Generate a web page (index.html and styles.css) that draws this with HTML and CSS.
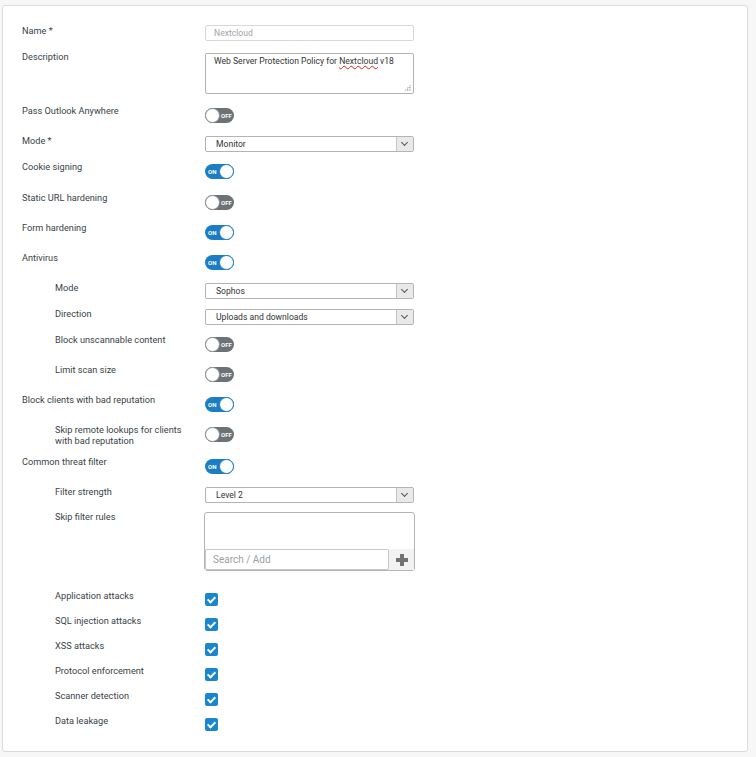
FILE: index.html
```html
<!DOCTYPE html>
<html lang="en">
<head>
    <meta charset="UTF-8">
    <title>Web Server Protection Policy</title>
    <link rel="stylesheet" href="styles.css">
</head>
<body>
    <div class="panel">
        <div class="row r-name">
            <label>Name *</label>
            <div class="input disabled">Nextcloud</div>
        </div>
        <div class="row r-desc">
            <label>Description</label>
            <div class="textarea">Web Server Protection Policy for <span class="typo">Nextcloud</span> v18<span class="grip"></span></div>
        </div>
        <div class="row r-toggle">
            <label>Pass Outlook Anywhere</label>
            <div class="toggle off"><span class="knob"></span><span class="txt">OFF</span></div>
        </div>
        <div class="row r-select">
            <label>Mode *</label>
            <div class="select"><span>Monitor</span><span class="arrow"></span></div>
        </div>
        <div class="row r-toggle r-gap">
            <label>Cookie signing</label>
            <div class="toggle on"><span class="txt">ON</span><span class="knob"></span></div>
        </div>
        <div class="row r-toggle">
            <label>Static URL hardening</label>
            <div class="toggle off"><span class="knob"></span><span class="txt">OFF</span></div>
        </div>
        <div class="row r-toggle">
            <label>Form hardening</label>
            <div class="toggle on"><span class="txt">ON</span><span class="knob"></span></div>
        </div>
        <div class="row r-toggle">
            <label>Antivirus</label>
            <div class="toggle on"><span class="txt">ON</span><span class="knob"></span></div>
        </div>
        <div class="row r-select sub">
            <label>Mode</label>
            <div class="select"><span>Sophos</span><span class="arrow"></span></div>
        </div>
        <div class="row r-select sub">
            <label>Direction</label>
            <div class="select"><span>Uploads and downloads</span><span class="arrow"></span></div>
        </div>
        <div class="row r-toggle sub">
            <label>Block unscannable content</label>
            <div class="toggle off"><span class="knob"></span><span class="txt">OFF</span></div>
        </div>
        <div class="row r-toggle sub">
            <label>Limit scan size</label>
            <div class="toggle off"><span class="knob"></span><span class="txt">OFF</span></div>
        </div>
        <div class="row r-toggle">
            <label>Block clients with bad reputation</label>
            <div class="toggle on"><span class="txt">ON</span><span class="knob"></span></div>
        </div>
        <div class="row r-toggle r-tall sub">
            <label>Skip remote lookups for clients with bad reputation</label>
            <div class="toggle off"><span class="knob"></span><span class="txt">OFF</span></div>
        </div>
        <div class="row r-toggle">
            <label>Common threat filter</label>
            <div class="toggle on"><span class="txt">ON</span><span class="knob"></span></div>
        </div>
        <div class="row r-select r-short sub">
            <label>Filter strength</label>
            <div class="select"><span>Level 2</span><span class="arrow"></span></div>
        </div>
        <div class="row r-rules sub">
            <label>Skip filter rules</label>
            <div class="rules">
                <div class="rules-list"></div>
                <div class="rules-add">
                    <div class="search">Search / Add</div>
                    <span class="plus"></span>
                </div>
            </div>
        </div>
        <div class="row r-check sub">
            <label>Application attacks</label>
            <span class="check"></span>
        </div>
        <div class="row r-check sub">
            <label>SQL injection attacks</label>
            <span class="check"></span>
        </div>
        <div class="row r-check sub">
            <label>XSS attacks</label>
            <span class="check"></span>
        </div>
        <div class="row r-check sub">
            <label>Protocol enforcement</label>
            <span class="check"></span>
        </div>
        <div class="row r-check sub">
            <label>Scanner detection</label>
            <span class="check"></span>
        </div>
        <div class="row r-check sub">
            <label>Data leakage</label>
            <span class="check"></span>
        </div>
    </div>
</body>
</html>
```

FILE: styles.css
```css
* {
    margin: 0;
    padding: 0;
    box-sizing: border-box;
}

body {
    font-family: Roboto, 'Liberation Sans', sans-serif;
    font-size: 9.2px;
    color: #3a3f47;
    background: #f7f7f7;
    padding: 5px 8px 0 2px;
    overflow: hidden;
}

.panel {
    background: white;
    border: 1px solid #dcdcdc;
    border-radius: 3px;
    padding: 18px 0 0 19px;
    height: 747px;
}

.row {
    display: grid;
    grid-template-columns: 183px 209px;
    align-items: start;
}

.row label {
    display: block;
    line-height: 11px;
    padding-top: 1px;
}

.row.sub label {
    padding-left: 33px;
    padding-right: 10px;
}

.r-name { height: 26px; }
.r-desc { height: 54px; }
.r-toggle { height: 30px; }
.r-toggle.r-gap { height: 31px; }
.r-toggle.r-tall { height: 32px; }
.r-select { height: 26px; }
.r-select.r-short { height: 25px; }
.r-rules { height: 79px; }
.r-check { height: 25px; }

/* text fields */
.input {
    height: 16px;
    margin-top: 1px;
    border: 1px solid #d8d8d8;
    border-radius: 2px;
    padding: 0 8px;
    font-size: 8.6px;
    line-height: 14px;
}

.input.disabled {
    color: #a0a4a8;
}

.textarea {
    position: relative;
    height: 41px;
    margin-top: 3px;
    border: 1px solid #b4b4b4;
    border-radius: 2px;
    padding: 2px 8px;
    font-size: 8.6px;
    line-height: 11px;
    color: #333;
}

.typo {
    text-decoration: underline wavy #e02020;
    text-decoration-thickness: 1px;
    text-underline-offset: 1px;
}

.grip {
    position: absolute;
    right: 2px;
    bottom: 2px;
    width: 7px;
    height: 7px;
    background:
        radial-gradient(circle, #999 0.7px, transparent 0.9px) 0 0 / 2.4px 2.4px;
    clip-path: polygon(100% 0, 100% 100%, 0 100%);
}

/* selects */
.select {
    display: flex;
    height: 16px;
    margin-top: 2px;
    border: 1px solid #b4b4b4;
    border-radius: 2px;
    font-size: 8.6px;
    line-height: 14px;
    color: #333;
}

.select span:first-child {
    flex: 1;
    padding-left: 10px;
}

.select .arrow {
    position: relative;
    width: 17px;
    background: #e9e9e9;
    border-left: 1px solid #c4c4c4;
}

.select .arrow::after {
    content: "";
    position: absolute;
    left: 5px;
    top: 3px;
    width: 4px;
    height: 4px;
    border-right: 1px solid #555;
    border-bottom: 1px solid #555;
    transform: rotate(45deg);
}

/* toggles */
.toggle {
    display: flex;
    align-items: center;
    width: 29px;
    height: 15px;
    margin-top: 4px;
    border-radius: 8px;
    font-size: 6px;
    font-weight: bold;
    color: white;
}

.toggle.on {
    background: #1b7ec5;
}

.toggle.off {
    background: #6d7277;
}

.knob {
    width: 15px;
    height: 15px;
    border-radius: 50%;
    background: white;
}

.toggle.on .knob {
    border: 1px solid #1b7ec5;
    margin-left: auto;
}

.toggle.off .knob {
    border: 1px solid #8a8e92;
}

.toggle.on .txt {
    padding-left: 3px;
}

.toggle.off .txt {
    padding-left: 1px;
}

/* skip filter rules */
.rules {
    display: flex;
    flex-direction: column;
    height: 59px;
    margin-top: 2px;
    margin-left: -1px;
    width: 211px;
    border: 1px solid #b4b4b4;
    border-radius: 3px;
}

.rules-list {
    flex: 1;
}

.rules-add {
    display: flex;
    height: 21px;
    background: #f2f2f2;
}

.search {
    width: 184px;
    border: 1px solid #c8c8c8;
    border-radius: 2px;
    background: white;
    padding-left: 7px;
    font-size: 10px;
    line-height: 19px;
    color: #9aa0a6;
}

.plus {
    position: relative;
    flex: 1;
}

.plus::before,
.plus::after {
    content: "";
    position: absolute;
    background: #6e7378;
    left: 50%;
    top: 50%;
    transform: translate(-50%, -50%);
}

.plus::before {
    width: 12px;
    height: 4px;
}

.plus::after {
    width: 4px;
    height: 12px;
}

/* checkboxes */
.check {
    position: relative;
    display: block;
    width: 13px;
    height: 13px;
    margin-top: 4px;
    border-radius: 2px;
    background: #1b86d0;
}

.check::after {
    content: "";
    position: absolute;
    left: 4px;
    top: 2px;
    width: 3px;
    height: 6px;
    border-right: 2px solid white;
    border-bottom: 2px solid white;
    transform: rotate(45deg);
}
```
